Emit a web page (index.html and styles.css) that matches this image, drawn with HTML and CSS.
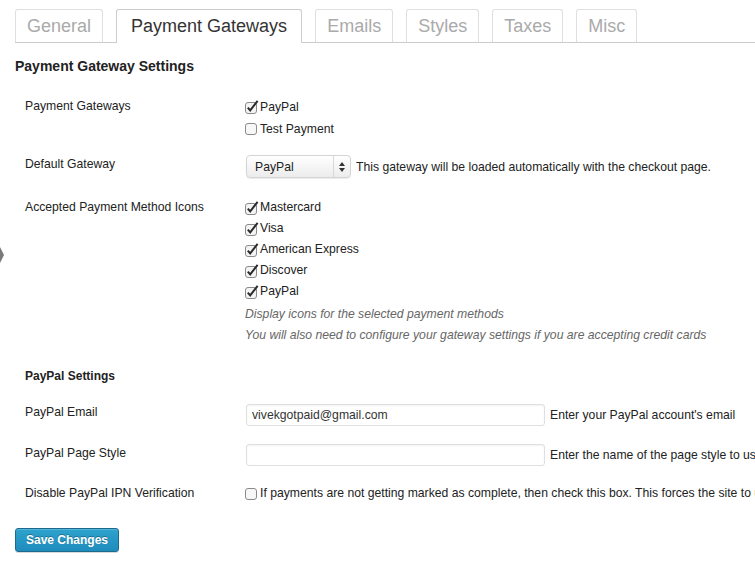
FILE: index.html
```html
<!DOCTYPE html>
<html>
<head>
<meta charset="utf-8">
<link rel="stylesheet" href="styles.css">
</head>
<body>
<div class="menu-pointer"></div>
<div class="wrap">
  <nav class="tabs">
    <a class="tab">General</a>
    <a class="tab active">Payment Gateways</a>
    <a class="tab">Emails</a>
    <a class="tab">Styles</a>
    <a class="tab">Taxes</a>
    <a class="tab">Misc</a>
  </nav>

  <h3 class="section-title">Payment Gateway Settings</h3>

  <div class="row row-gateways">
    <div class="label">Payment Gateways</div>
    <div class="field">
      <div class="check-line tall"><span class="cb checked"><svg viewBox="0 0 14 14" width="14" height="14"><rect x="0.5" y="2.5" width="11" height="11" rx="2.5" fill="#f4f4f4" stroke="#8a8a8a"/><path d="M2.8 7.6 L5.2 10.4 L12.6 0.9" fill="none" stroke="#2b2b2b" stroke-width="2"/></svg></span>PayPal</div>
      <div class="check-line tall"><span class="cb"><svg viewBox="0 0 14 14" width="14" height="14"><rect x="0.5" y="1.5" width="11" height="11" rx="2.5" fill="#f7f7f7" stroke="#8a8a8a"/></svg></span>Test Payment</div>
    </div>
  </div>

  <div class="row row-default">
    <div class="label">Default Gateway</div>
    <div class="field inline">
      <div class="select"><span class="select-value">PayPal</span><span class="select-arrows"><svg viewBox="0 0 8 12" width="8" height="12"><path d="M1 5 L4 1 L7 5 Z M1 7 L4 11 L7 7 Z" fill="#333"/></svg></span></div>
      <span class="desc-inline">This gateway will be loaded automatically with the checkout page.</span>
    </div>
  </div>

  <div class="row row-icons">
    <div class="label">Accepted Payment Method Icons</div>
    <div class="field">
      <div class="check-line"><span class="cb checked"><svg viewBox="0 0 14 14" width="14" height="14"><rect x="0.5" y="2.5" width="11" height="11" rx="2.5" fill="#f4f4f4" stroke="#8a8a8a"/><path d="M2.8 7.6 L5.2 10.4 L12.6 0.9" fill="none" stroke="#2b2b2b" stroke-width="2"/></svg></span>Mastercard</div>
      <div class="check-line"><span class="cb checked"><svg viewBox="0 0 14 14" width="14" height="14"><rect x="0.5" y="2.5" width="11" height="11" rx="2.5" fill="#f4f4f4" stroke="#8a8a8a"/><path d="M2.8 7.6 L5.2 10.4 L12.6 0.9" fill="none" stroke="#2b2b2b" stroke-width="2"/></svg></span>Visa</div>
      <div class="check-line"><span class="cb checked"><svg viewBox="0 0 14 14" width="14" height="14"><rect x="0.5" y="2.5" width="11" height="11" rx="2.5" fill="#f4f4f4" stroke="#8a8a8a"/><path d="M2.8 7.6 L5.2 10.4 L12.6 0.9" fill="none" stroke="#2b2b2b" stroke-width="2"/></svg></span>American Express</div>
      <div class="check-line"><span class="cb checked"><svg viewBox="0 0 14 14" width="14" height="14"><rect x="0.5" y="2.5" width="11" height="11" rx="2.5" fill="#f4f4f4" stroke="#8a8a8a"/><path d="M2.8 7.6 L5.2 10.4 L12.6 0.9" fill="none" stroke="#2b2b2b" stroke-width="2"/></svg></span>Discover</div>
      <div class="check-line"><span class="cb checked"><svg viewBox="0 0 14 14" width="14" height="14"><rect x="0.5" y="2.5" width="11" height="11" rx="2.5" fill="#f4f4f4" stroke="#8a8a8a"/><path d="M2.8 7.6 L5.2 10.4 L12.6 0.9" fill="none" stroke="#2b2b2b" stroke-width="2"/></svg></span>PayPal</div>
      <p class="desc first">Display icons for the selected payment methods</p>
      <p class="desc">You will also need to configure your gateway settings if you are accepting credit cards</p>
    </div>
  </div>

  <h4 class="sub-title">PayPal Settings</h4>

  <div class="row row-email">
    <div class="label">PayPal Email</div>
    <div class="field inline">
      <div class="text-input">vivekgotpaid@gmail.com</div>
      <span class="desc-inline">Enter your PayPal account's email</span>
    </div>
  </div>

  <div class="row row-style">
    <div class="label">PayPal Page Style</div>
    <div class="field inline">
      <div class="text-input"></div>
      <span class="desc-inline">Enter the name of the page style to use, or leave blank for default</span>
    </div>
  </div>

  <div class="row row-ipn">
    <div class="label">Disable PayPal IPN Verification</div>
    <div class="field">
      <div class="check-line nowrap"><span class="cb"><svg viewBox="0 0 14 14" width="14" height="14"><rect x="0.5" y="1.5" width="11" height="11" rx="2.5" fill="#f7f7f7" stroke="#8a8a8a"/></svg></span>If payments are not getting marked as complete, then check this box. This forces the site to use a slightly less secure method of verifying purchases.</div>
    </div>
  </div>

  <div class="actions">
    <button class="button-primary">Save Changes</button>
  </div>
</div>
</body>
</html>
```

FILE: styles.css
```css
html, body {
  margin: 0;
  padding: 0;
  overflow: hidden;
  background: #ffffff;
}
body {
  width: 755px;
  height: 562px;
  position: relative;
  font-family: "Liberation Sans", Arial, Helvetica, sans-serif;
  font-size: 12.2px;
  color: #333333;
}
.menu-pointer {
  position: absolute;
  left: 0;
  top: 247px;
  width: 0;
  height: 0;
  border-top: 8px solid transparent;
  border-bottom: 8px solid transparent;
  border-left: 4px solid #7a7a7a;
}
.wrap {
  padding: 9px 0 0 15px;
}
.tabs {
  display: flex;
  gap: 13px;
  border-bottom: 1px solid #cccccc;
  height: 33px;
  white-space: nowrap;
}
.tab {
  display: block;
  height: 32px;
  line-height: 32px;
  padding: 0 11px;
  font-size: 18px;
  color: #aaaaaa;
  border: 1px solid #dfdfdf;
  border-bottom: none;
  border-radius: 3px 3px 0 0;
  background: #ffffff;
}
.tab.active {
  color: #333333;
  border-color: #cccccc;
  height: 33px;
  padding: 0 14px;
}
.section-title {
  margin: 15px 0 0 0;
  font-size: 14px;
  line-height: 16px;
  font-weight: bold;
  color: #222222;
}
.row {
  display: flex;
  white-space: nowrap;
}
.label {
  width: 220px;
  padding-left: 10px;
  flex: none;
  line-height: 18px;
  color: #222222;
}
.field {
  flex: none;
}
.field.inline {
  display: flex;
  align-items: center;
  gap: 5px;
}
.check-line {
  display: flex;
  align-items: center;
  height: 21px;
  line-height: 21px;
  color: #222222;
}
.check-line.tall {
  height: 22px;
}
.cb {
  display: inline-flex;
  width: 15px;
  height: 14px;
  flex: none;
}
.row-gateways {
  margin-top: 22px;
}
.row-gateways .label {
  line-height: 21px;
}
.row-default {
  margin-top: 15px;
}
.select {
  display: flex;
  align-items: center;
  width: 103px;
  height: 21px;
  border: 1px solid #d4d4d4;
  border-radius: 4px;
  background: linear-gradient(#ffffff, #ececec);
  box-shadow: 0 1px 1px rgba(0,0,0,0.08);
  margin-left: 1px;
}
.select-value {
  flex: 1;
  padding-left: 8px;
  color: #222222;
}
.select-arrows {
  width: 16px;
  height: 21px;
  border-left: 1px solid #d8d8d8;
  display: flex;
  align-items: center;
  justify-content: center;
}
.desc-inline {
  color: #222222;
}
.row-icons {
  margin-top: 19px;
}
.row-icons .label {
  line-height: 21px;
}
.desc {
  margin: 0;
  line-height: 21px;
  font-style: italic;
  color: #666666;
}
.desc.first {
  margin-top: 2px;
}
.sub-title {
  margin: 20px 0 0 10px;
  font-size: 12px;
  line-height: 21px;
  font-weight: bold;
  color: #222222;
}
.row-email {
  margin-top: 16px;
  align-items: flex-start;
}
.row-email .field.inline,
.row-style .field.inline {
  padding-top: 1px;
}
.text-input {
  box-sizing: border-box;
  width: 299px;
  height: 22px;
  line-height: 20px;
  border: 1px solid #dfdfdf;
  border-radius: 3px;
  padding: 0 5px;
  margin-left: 1px;
  color: #333333;
  background: #ffffff;
  box-shadow: inset 0 1px 2px rgba(0,0,0,0.05);
}
.row-style {
  margin-top: 17px;
  align-items: flex-start;
}
.row-style .label {
  padding-top: 1px;
}
.row-ipn {
  margin-top: 17px;
}
.row-ipn .label {
  line-height: 21px;
}
.actions {
  margin-top: 24px;
}
.button-primary {
  display: block;
  height: 24px;
  padding: 0 10px;
  font-family: "Liberation Sans", Arial, Helvetica, sans-serif;
  font-size: 12px;
  font-weight: bold;
  color: #ffffff;
  border: 1px solid #1e6a8d;
  border-radius: 3px;
  background: linear-gradient(#2ea2cc, #1e8cbe);
  box-shadow: inset 0 1px 0 rgba(120,200,230,0.5), 0 1px 0 rgba(0,0,0,0.15);
  text-shadow: 0 -1px 0 rgba(0,0,0,0.3);
}
```
